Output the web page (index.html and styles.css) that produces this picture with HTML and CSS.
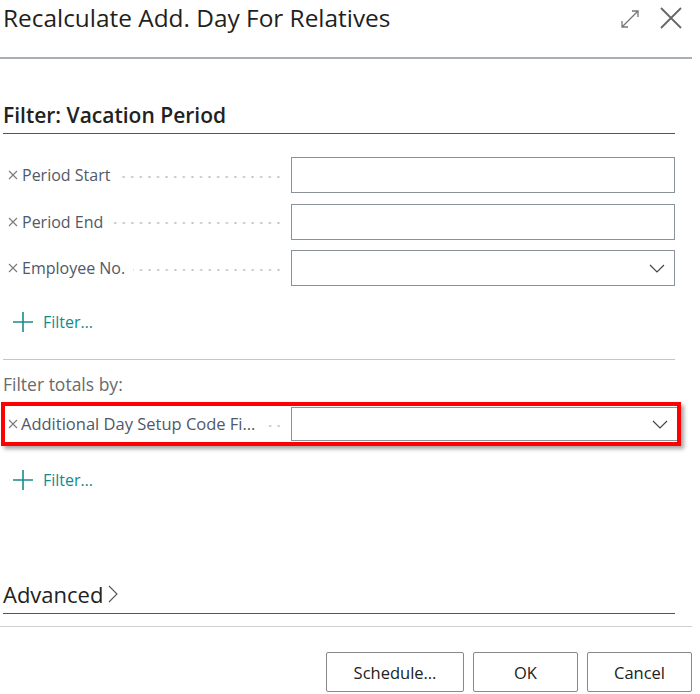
FILE: index.html
```html
<!DOCTYPE html>
<html>
<head>
<meta charset="utf-8">
<link rel="stylesheet" href="styles.css">
</head>
<body>
<div class="dialog">
  <header class="header">
    <h1 class="title">Recalculate Add. Day For Relatives</h1>
    <div class="header-icons">
      <svg class="icon-expand" width="20" height="20" viewBox="0 0 20 20"><path d="M2 18 L18 2 M12 2 H18 V8 M2 12 V18 H8" fill="none" stroke="#777" stroke-width="1.3"/></svg>
      <svg class="icon-close" width="22" height="22" viewBox="0 0 22 22"><path d="M1 1 L21 21 M21 1 L1 21" fill="none" stroke="#666" stroke-width="1.8"/></svg>
    </div>
  </header>
  <div class="header-line"></div>

  <div class="content">
    <h2 class="section-title">Filter: Vacation Period</h2>

    <div class="rows">
      <div class="row">
        <div class="label-wrap">
          <svg class="x" width="10" height="10" viewBox="0 0 10 10"><path d="M1 1 L9 9 M9 1 L1 9" stroke="#7a7a7a" stroke-width="1.1"/></svg>
          <span class="label">Period Start</span>
          <span class="leader"></span>
        </div>
        <div class="input"></div>
      </div>
      <div class="row">
        <div class="label-wrap">
          <svg class="x" width="10" height="10" viewBox="0 0 10 10"><path d="M1 1 L9 9 M9 1 L1 9" stroke="#7a7a7a" stroke-width="1.1"/></svg>
          <span class="label">Period End</span>
          <span class="leader"></span>
        </div>
        <div class="input"></div>
      </div>
      <div class="row">
        <div class="label-wrap">
          <svg class="x" width="10" height="10" viewBox="0 0 10 10"><path d="M1 1 L9 9 M9 1 L1 9" stroke="#7a7a7a" stroke-width="1.1"/></svg>
          <span class="label">Employee No.</span>
          <span class="leader"></span>
        </div>
        <div class="input select">
          <svg class="chev" width="16" height="9" viewBox="0 0 16 9"><path d="M1 1 L8 8 L15 1" fill="none" stroke="#444" stroke-width="1.2"/></svg>
        </div>
      </div>
    </div>

    <div class="add-filter first">
      <svg width="22" height="22" viewBox="0 0 22 22"><path d="M11 1 V21 M1 11 H21" stroke="#1a8a8f" stroke-width="1.6"/></svg>
      <span>Filter…</span>
    </div>

    <div class="separator"></div>

    <div class="totals-title">Filter totals by:</div>

    <div class="highlight">
      <div class="row">
        <div class="label-wrap">
          <svg class="x" width="10" height="10" viewBox="0 0 10 10"><path d="M1 1 L9 9 M9 1 L1 9" stroke="#7a7a7a" stroke-width="1.1"/></svg>
          <span class="label trunc">Additional Day Setup Code Filter</span>
          <span class="leader short"></span>
        </div>
        <div class="input select">
          <svg class="chev" width="16" height="9" viewBox="0 0 16 9"><path d="M1 1 L8 8 L15 1" fill="none" stroke="#444" stroke-width="1.2"/></svg>
        </div>
      </div>
    </div>

    <div class="add-filter second">
      <svg width="22" height="22" viewBox="0 0 22 22"><path d="M11 1 V21 M1 11 H21" stroke="#1a8a8f" stroke-width="1.6"/></svg>
      <span>Filter…</span>
    </div>

    <div class="advanced">
      <span>Advanced</span>
      <svg width="10" height="18" viewBox="0 0 10 18"><path d="M1 1 L9 9 L1 17" fill="none" stroke="#555" stroke-width="1.1"/></svg>
    </div>
  </div>

  <div class="footer-line"></div>

  <div class="buttons">
    <button class="btn btn-schedule">Schedule…</button>
    <button class="btn btn-ok">OK</button>
    <button class="btn btn-cancel">Cancel</button>
  </div>
</div>
</body>
</html>
```

FILE: styles.css
```css
html, body {
  margin: 0;
  padding: 0;
  background: #ffffff;
}

body {
  font-family: "Open Sans", "Noto Sans", sans-serif;
  color: #212121;
}

.dialog {
  width: 700px;
  height: 694px;
  overflow: hidden;
}

.header {
  height: 57px;
  display: flex;
  align-items: flex-start;
  justify-content: space-between;
  padding-right: 18px;
  box-sizing: border-box;
}

.title {
  margin: 0;
  padding-left: 3px;
  font-size: 24.4px;
  font-weight: 400;
  line-height: 36px;
  color: #1f1f1f;
}

.header-icons {
  display: flex;
  align-items: center;
  gap: 20px;
  padding-top: 7px;
}

.icon-expand {
  margin-top: 1px;
}

.header-line {
  width: 692px;
  height: 2px;
  background: #a9afb8;
}

.content {
  width: 672px;
  margin-left: 3px;
}

.section-title {
  margin: 44px 0 0 0;
  padding-bottom: 6px;
  font-size: 21px;
  font-weight: 600;
  line-height: 24px;
  color: #222;
  border-bottom: 1px solid #4c5563;
}

.rows {
  margin-top: 23px;
  display: flex;
  flex-direction: column;
  gap: 10.5px;
}

.row {
  display: flex;
  align-items: center;
  height: 36px;
}

.label-wrap {
  width: 280px;
  display: flex;
  align-items: center;
  margin-right: 8px;
  min-width: 0;
}

.x {
  flex: none;
  margin-left: 5px;
  margin-right: 4px;
}

.label {
  font-size: 16px;
  line-height: 24px;
  color: #4f5968;
  white-space: nowrap;
}

.label.trunc {
  overflow: hidden;
  text-overflow: ellipsis;
  font-size: 16.5px;
  max-width: 238px;
}

.leader {
  flex: 1;
  height: 4px;
  margin-left: 8px;
  margin-top: 3px;
  background-image: radial-gradient(circle, #c4c4c4 0.9px, transparent 1.3px);
  background-size: 8.6px 4px;
  background-repeat: repeat-x;
  background-position: right center;
}

.input {
  flex: 1;
  height: 36px;
  box-sizing: border-box;
  border: 1.5px solid #8a929c;
  background: #fff;
  display: flex;
  align-items: center;
  justify-content: flex-end;
}

.chev {
  margin-right: 9px;
}

.add-filter {
  display: flex;
  align-items: center;
  gap: 9px;
  padding-left: 9px;
  font-size: 16px;
  line-height: 24px;
  color: #118a8f;
}

.add-filter.first {
  margin-top: 24px;
}

.separator {
  margin-top: 25px;
  height: 1px;
  background: #c6c6c6;
}

.totals-title {
  margin-top: 12px;
  font-size: 17.5px;
  line-height: 24px;
  color: #6a6a6a;
}

.highlight {
  margin-top: 6px;
  margin-left: -2px;
  width: 680px;
  box-sizing: border-box;
  border: 4px solid #ff0000;
  padding: 1px 0;
  box-shadow: 3px 3px 4px rgba(0, 0, 0, 0.35);
}

.highlight .row {
  height: 34px;
}

.highlight .input {
  height: 34px;
  border-right: none;
}

.highlight .label-wrap {
  width: 278px;
}

.highlight .x {
  margin-left: 3px;
  margin-right: 3px;
}

.leader.short {
  margin-left: 6px;
}

.add-filter.second {
  margin-top: 22px;
}

.advanced {
  margin-top: 89px;
  display: flex;
  align-items: center;
  gap: 5px;
  font-size: 22px;
  line-height: 26px;
  color: #222;
  border-bottom: 1px solid #4c5563;
  padding-bottom: 6px;
}

.footer-line {
  margin-top: 12px;
  width: 692px;
  height: 1px;
  background: #d0d0d0;
}

.buttons {
  display: flex;
  justify-content: flex-end;
  gap: 9px;
  width: 692px;
  margin-top: 25px;
}

.btn {
  height: 40px;
  box-sizing: border-box;
  background: #fff;
  border: 1px solid #8a8886;
  border-radius: 2px;
  font-family: "Open Sans", "Noto Sans", sans-serif;
  font-size: 16.5px;
  color: #212121;
  padding: 0;
}

.btn-schedule { width: 138px; }
.btn-ok { width: 105px; }
.btn-cancel { width: 105px; }
```
